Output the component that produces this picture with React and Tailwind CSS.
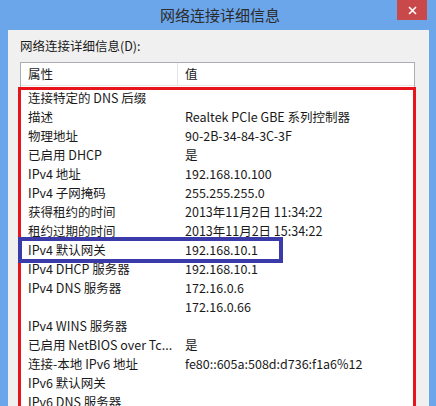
const rows = [
  ['连接特定的 DNS 后缀', ''],
  ['描述', 'Realtek PCIe GBE 系列控制器'],
  ['物理地址', '90-2B-34-84-3C-3F'],
  ['已启用 DHCP', '是'],
  ['IPv4 地址', '192.168.10.100'],
  ['IPv4 子网掩码', '255.255.255.0'],
  ['获得租约的时间', '2013年11月2日 11:34:22'],
  ['租约过期的时间', '2013年11月2日 15:34:22'],
  ['IPv4 默认网关', '192.168.10.1'],
  ['IPv4 DHCP 服务器', '192.168.10.1'],
  ['IPv4 DNS 服务器', '172.16.0.6'],
  ['', '172.16.0.66'],
  ['IPv4 WINS 服务器', ''],
  ['已启用 NetBIOS over Tc...', '是'],
  ['连接-本地 IPv6 地址', 'fe80::605a:508d:d736:f1a6%12'],
  ['IPv6 默认网关', ''],
  ['IPv6 DNS 服务器', ''],
];

export default function App() {
  return (
    <div
      className="w-[436px] h-[406px] overflow-hidden bg-[#6ba6ea] flex flex-col text-[#1a1a1a]"
      style={{ fontFamily: '"Noto Sans CJK SC", "Noto Sans", sans-serif' }}
    >
      <div className="relative h-[30px] shrink-0 flex items-center justify-center">
        <span className="text-[15px] text-[#2b2b2b] pl-1">网络连接详细信息</span>
        <div className="absolute right-[9px] top-0 w-[30px] h-[20px] bg-[#c9484a] flex items-center justify-center">
          <svg width="9" height="9" viewBox="0 0 9 9">
            <path d="M1 1 L8 8 M8 1 L1 8" stroke="#fff" strokeWidth="1.6" />
          </svg>
        </div>
      </div>

      <div className="flex-1 mx-[8px] mr-[7px] bg-[#f0f0f0] flex flex-col">
        <div className="h-[32px] pl-[12px] flex items-center text-[12.5px]">网络连接详细信息(D):</div>

        <div className="relative ml-[12px] mr-[14px] flex-1 bg-white border border-[#abadb3] border-b-0 text-[12.5px]">
          <div className="h-[23px] flex items-stretch border-b border-[#e5e5e5]">
            <div className="w-[157px] pl-[7px] flex items-center border-r border-[#e5e5e5]">属性</div>
            <div className="pl-[7px] flex items-center">值</div>
          </div>
          <div className="pt-[3px] flex flex-col">
            {rows.map(([k, v], i) => (
              <div key={i} className="h-[19px] flex items-center whitespace-nowrap">
                <div className="w-[157px] pl-[7px]">{k}</div>
                <div className="pl-[7px]">{v}</div>
              </div>
            ))}
          </div>

          <div className="absolute left-[-3px] top-[24px] right-[-2px] h-[400px] border-[3px] border-[#e8141b]" />
          <div className="absolute left-[-3px] top-[174px] w-[265px] h-[26px] border-[4px] border-[#3a3aa8]" />
        </div>
      </div>
    </div>
  );
}
